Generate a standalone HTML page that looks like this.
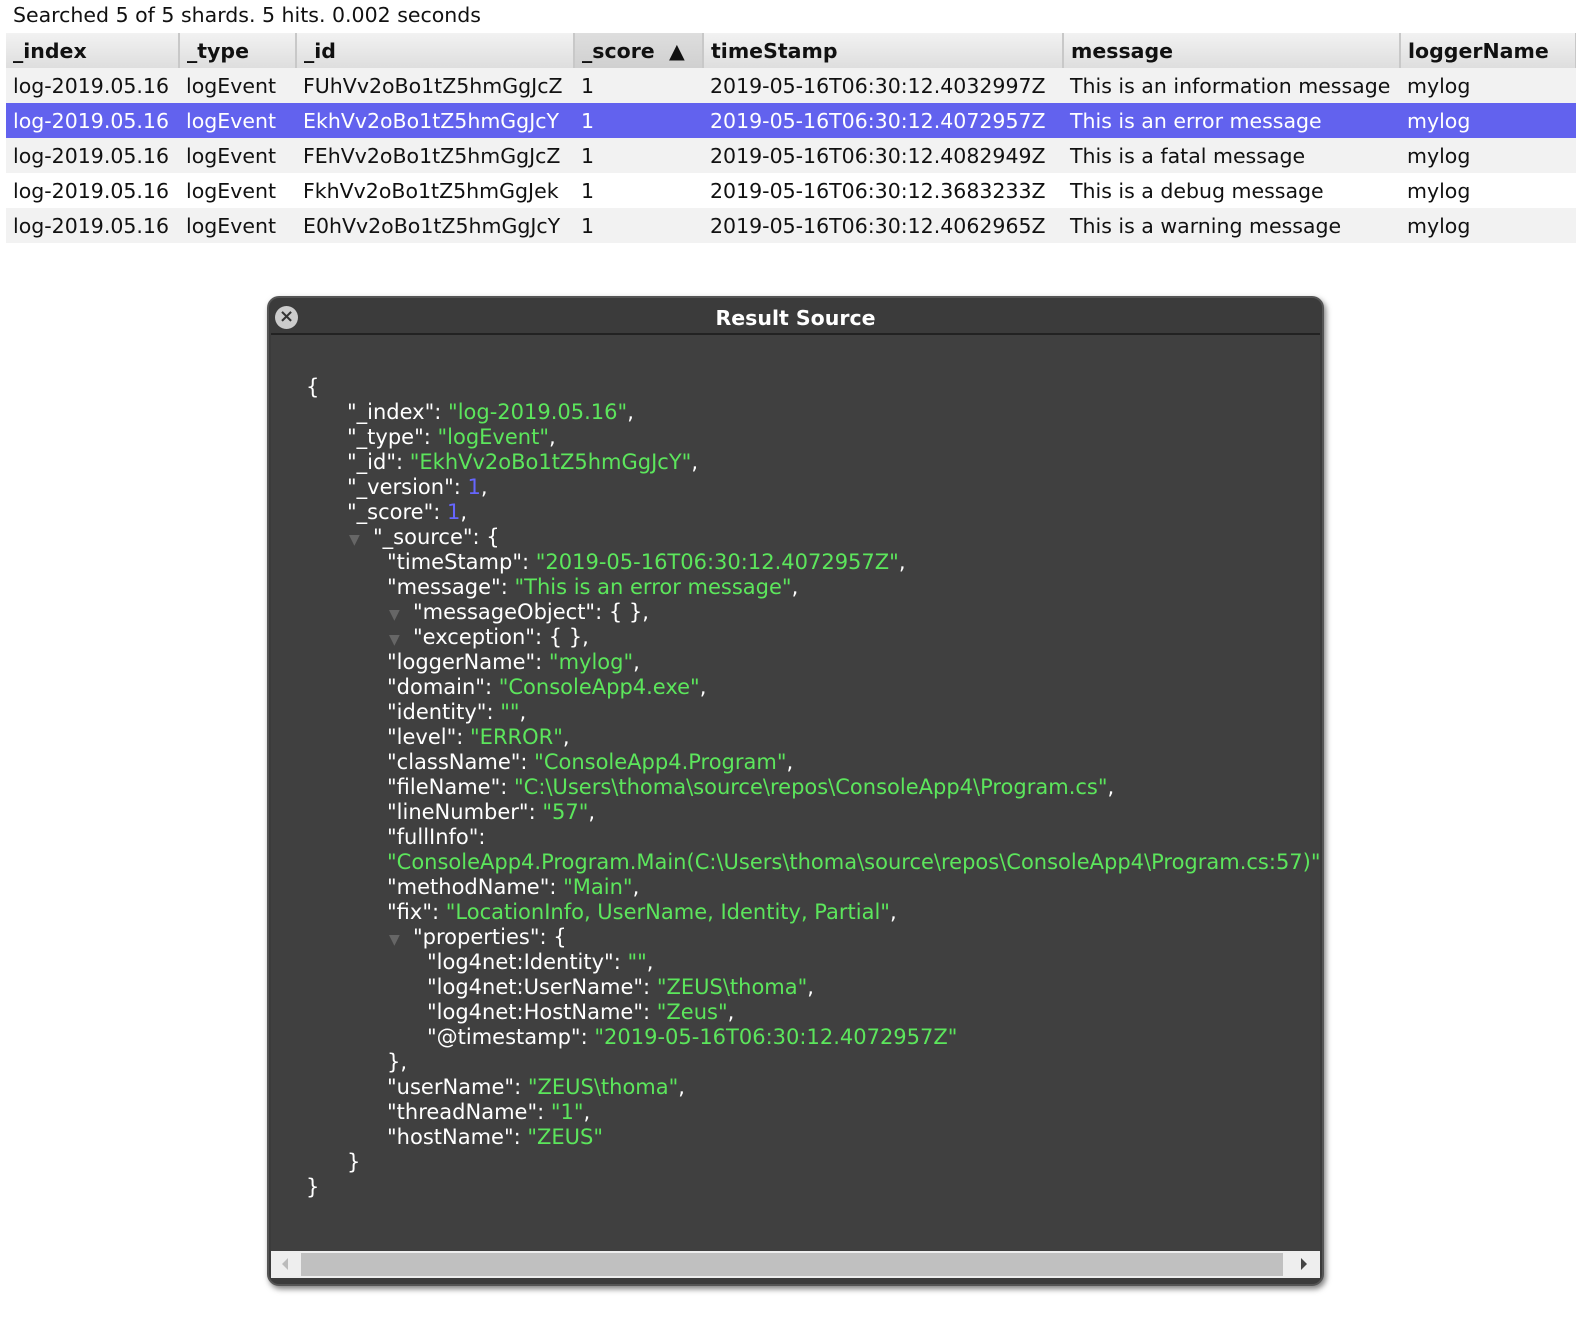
<!DOCTYPE html>
<html><head><meta charset="utf-8"><style>
*{margin:0;padding:0;box-sizing:border-box}
body{width:1576px;height:1324px;background:#fff;font-family:"DejaVu Sans","Liberation Sans",sans-serif;position:relative;overflow:hidden;color:#111}
.info{position:absolute;left:13px;top:3px;font-size:20.5px;line-height:24px}
table{position:absolute;left:6px;top:33px;border-collapse:collapse;font-size:20.5px;width:1570px;table-layout:fixed}
td,th{height:35px;padding:0 0 0 7px;text-align:left;white-space:nowrap;overflow:hidden}
th{font-weight:bold;background:linear-gradient(#f2f2f2,#dedede);border-right:2px solid #c8c8c8;color:#111}
th.s{background:linear-gradient(#dedede,#d0d0d0)}
tr.o td{background:#f2f2f2}
tr.e td{background:#fff}
tr.sel td{background:#6262ee;color:#fff}
.dlg{position:absolute;left:267px;top:296px;width:1057px;height:990px;background:#3b3b3b;border:2px solid #555;border-radius:12px;box-shadow:2px 3px 6px rgba(0,0,0,.5)}
.title{position:absolute;left:0;top:0;width:100%;height:36px;text-align:center;color:#fff;font-weight:bold;font-size:20.5px;line-height:40px}
.close{position:absolute;left:6px;top:8px;width:23px;height:23px;border-radius:50%;background:#ccc;color:#333;font-size:18px;font-weight:bold;line-height:22px;text-align:center}
.body{position:absolute;left:2px;top:35px;width:1049px;height:918px;background:#404040;border-top:2px solid #222;overflow:hidden}
.code{position:absolute;left:0;top:40px;font-size:21px;line-height:25px;color:#fff}
.code div{height:25px;white-space:nowrap}
.g{color:#5ce65c}.n{color:#6666ff}
.ar{color:#666;font-size:14px;display:inline-block;width:24px}
.sb{position:absolute;left:2px;top:953px;width:1049px;height:27px;background:#eee}
.thumb{position:absolute;left:30px;top:2px;width:982px;height:23px;background:#c0c0c0}
.la,.ra{position:absolute;top:7px;width:0;height:0;border-top:6px solid transparent;border-bottom:6px solid transparent}
.la{left:11px;border-right:6px solid #bbb}
.ra{left:1030px;border-left:6px solid #444}
</style></head><body>
<div class="info">Searched 5 of 5 shards. 5 hits. 0.002 seconds</div>
<table>
<colgroup><col style="width:173px"><col style="width:117px"><col style="width:278px"><col style="width:129px"><col style="width:360px"><col style="width:337px"><col style="width:176px"></colgroup>
<tr><th>_index</th><th>_type</th><th>_id</th><th class="s">_score &nbsp;▲</th><th>timeStamp</th><th>message</th><th>loggerName</th></tr>
<tr class="o"><td>log-2019.05.16</td><td>logEvent</td><td>FUhVv2oBo1tZ5hmGgJcZ</td><td>1</td><td>2019-05-16T06:30:12.4032997Z</td><td>This is an information message</td><td>mylog</td></tr>
<tr class="sel"><td>log-2019.05.16</td><td>logEvent</td><td>EkhVv2oBo1tZ5hmGgJcY</td><td>1</td><td>2019-05-16T06:30:12.4072957Z</td><td>This is an error message</td><td>mylog</td></tr>
<tr class="o"><td>log-2019.05.16</td><td>logEvent</td><td>FEhVv2oBo1tZ5hmGgJcZ</td><td>1</td><td>2019-05-16T06:30:12.4082949Z</td><td>This is a fatal message</td><td>mylog</td></tr>
<tr class="e"><td>log-2019.05.16</td><td>logEvent</td><td>FkhVv2oBo1tZ5hmGgJek</td><td>1</td><td>2019-05-16T06:30:12.3683233Z</td><td>This is a debug message</td><td>mylog</td></tr>
<tr class="o"><td>log-2019.05.16</td><td>logEvent</td><td>E0hVv2oBo1tZ5hmGgJcY</td><td>1</td><td>2019-05-16T06:30:12.4062965Z</td><td>This is a warning message</td><td>mylog</td></tr>
</table>
<div class="dlg">
<div class="title">Result Source</div>
<div class="close">×</div>
<div class="body">
<div class="code"><div style="padding-left:35px">{</div><div style="padding-left:76px">"_index": <span class="g">"log-2019.05.16"</span>,</div><div style="padding-left:76px">"_type": <span class="g">"logEvent"</span>,</div><div style="padding-left:76px">"_id": <span class="g">"EkhVv2oBo1tZ5hmGgJcY"</span>,</div><div style="padding-left:76px">"_version": <span class="n">1</span>,</div><div style="padding-left:76px">"_score": <span class="n">1</span>,</div><div style="padding-left:78px"><span class="ar">▼</span>"_source": {</div><div style="padding-left:116px">"timeStamp": <span class="g">"2019-05-16T06:30:12.4072957Z"</span>,</div><div style="padding-left:116px">"message": <span class="g">"This is an error message"</span>,</div><div style="padding-left:118px"><span class="ar">▼</span>"messageObject": { },</div><div style="padding-left:118px"><span class="ar">▼</span>"exception": { },</div><div style="padding-left:116px">"loggerName": <span class="g">"mylog"</span>,</div><div style="padding-left:116px">"domain": <span class="g">"ConsoleApp4.exe"</span>,</div><div style="padding-left:116px">"identity": <span class="g">""</span>,</div><div style="padding-left:116px">"level": <span class="g">"ERROR"</span>,</div><div style="padding-left:116px">"className": <span class="g">"ConsoleApp4.Program"</span>,</div><div style="padding-left:116px">"fileName": <span class="g">"C:\Users\thoma\source\repos\ConsoleApp4\Program.cs"</span>,</div><div style="padding-left:116px">"lineNumber": <span class="g">"57"</span>,</div><div style="padding-left:116px">"fullInfo":</div><div style="padding-left:116px"><span class="g">"ConsoleApp4.Program.Main(C:\Users\thoma\source\repos\ConsoleApp4\Program.cs:57)"</span></div><div style="padding-left:116px">"methodName": <span class="g">"Main"</span>,</div><div style="padding-left:116px">"fix": <span class="g">"LocationInfo, UserName, Identity, Partial"</span>,</div><div style="padding-left:118px"><span class="ar">▼</span>"properties": {</div><div style="padding-left:156px">"log4net:Identity": <span class="g">""</span>,</div><div style="padding-left:156px">"log4net:UserName": <span class="g">"ZEUS\thoma"</span>,</div><div style="padding-left:156px">"log4net:HostName": <span class="g">"Zeus"</span>,</div><div style="padding-left:156px">"@timestamp": <span class="g">"2019-05-16T06:30:12.4072957Z"</span></div><div style="padding-left:116px">},</div><div style="padding-left:116px">"userName": <span class="g">"ZEUS\thoma"</span>,</div><div style="padding-left:116px">"threadName": <span class="g">"1"</span>,</div><div style="padding-left:116px">"hostName": <span class="g">"ZEUS"</span></div><div style="padding-left:76px">}</div><div style="padding-left:35px">}</div></div>
</div>
<div class="sb"><div class="la"></div><div class="thumb"></div><div class="ra"></div></div>
</div>
</body></html>
